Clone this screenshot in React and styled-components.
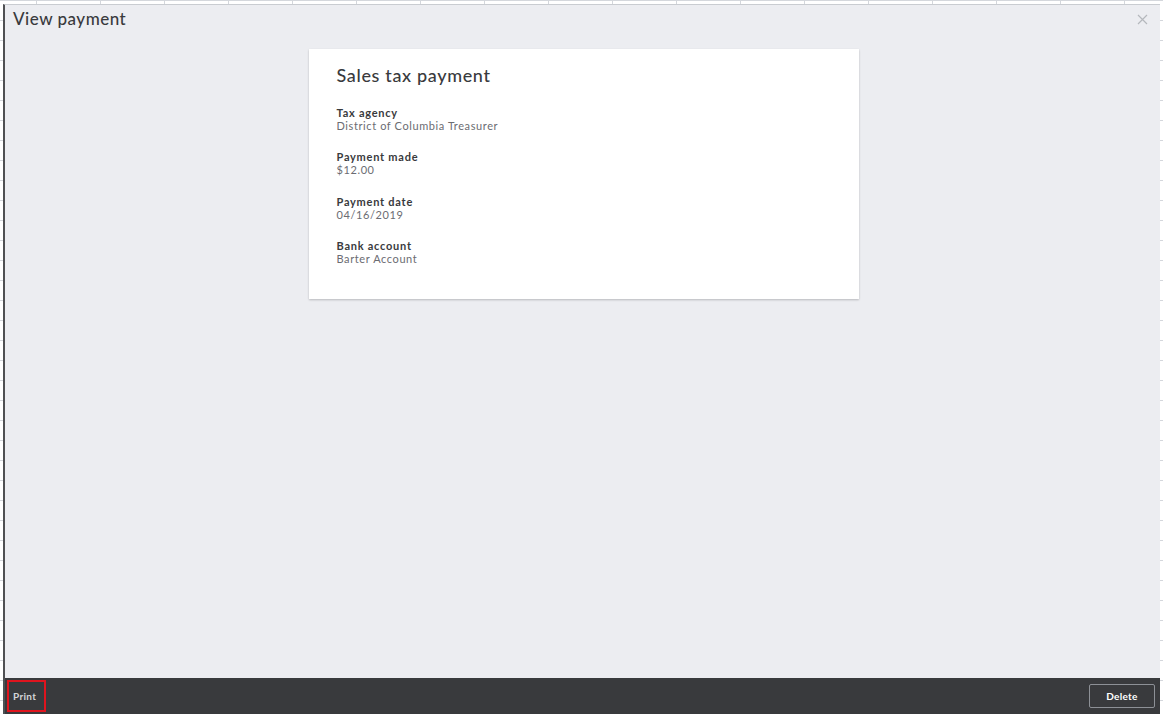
import React from "react";
import styled, { createGlobalStyle } from "styled-components";

const GlobalStyle = createGlobalStyle`
  html, body {
    margin: 0;
    padding: 0;
    height: 714px;
    overflow: hidden;
  }

  body {
    font-family: Lato, "Open Sans", sans-serif;
    background-color: #ffffff;
    background-image:
      linear-gradient(to right, #d4d7dc 1px, transparent 1px),
      linear-gradient(to bottom, #d4d7dc 1px, transparent 1px);
    background-size: 64px 20px, 64px 20px;
    background-position: 36px 0, 0 0;
  }
`;

const fields = [
  { label: "Tax agency", value: "District of Columbia Treasurer" },
  { label: "Payment made", value: "$12.00" },
  { label: "Payment date", value: "04/16/2019" },
  { label: "Bank account", value: "Barter Account" },
];

const CloseIcon = () => (
  <svg width="11" height="11" viewBox="0 0 11 11">
    <path d="M1 1L10 10M10 1L1 10" stroke="#b5b8bd" strokeWidth="1.2" fill="none" />
  </svg>
);

const App = () => {
  return (
    <>
      <GlobalStyle />
      <Panel>
        <Header>
          <h1>View payment</h1>
          <CloseButton aria-label='Close'>
            <CloseIcon />
          </CloseButton>
        </Header>
        <Body>
          <Card>
            <h2>Sales tax payment</h2>
            {fields.map((f) => (
              <Field key={f.label}>
                <dt>{f.label}</dt>
                <dd>{f.value}</dd>
              </Field>
            ))}
          </Card>
        </Body>
        <Footer>
          <FooterButton $focused>Print</FooterButton>
          <FooterButton $outlined>Delete</FooterButton>
        </Footer>
      </Panel>
    </>
  );
};

export default App;

const Panel = styled.div`
  display: flex;
  flex-direction: column;
  height: 709px;
  margin: 4px 3px 0 3px;
  border-top: 1px solid #c9ccd1;
  border-left: 2px solid #4f5053;
  background-color: #ecedf1;
`;

const Header = styled.header`
  display: flex;
  align-items: center;
  justify-content: space-between;
  height: 27px;
  padding: 0 12px 0 8px;

  h1 {
    margin: 0;
    font-size: 17px;
    font-weight: 500;
    letter-spacing: 0.5px;
    color: #393a3d;
  }
`;

const CloseButton = styled.button`
  display: flex;
  padding: 0;
  margin-top: 2px;
  border: none;
  background: none;
`;

const Body = styled.main`
  flex: 1;
  display: flex;
  justify-content: center;
  align-items: flex-start;
  padding-top: 17px;
  padding-left: 2px;
`;

const Card = styled.dl`
  width: 550px;
  margin: 0;
  padding: 14px 28px 34px;
  box-sizing: border-box;
  background-color: #ffffff;
  box-shadow: 0 1px 2px rgba(0, 0, 0, 0.22);

  h2 {
    margin: 0;
    font-size: 18px;
    line-height: 24px;
    font-weight: 500;
    letter-spacing: 0.65px;
    color: #393a3d;
  }
`;

const Field = styled.div`
  margin-top: 18.5px;

  dt {
    font-size: 11px;
    line-height: 13px;
    font-weight: 700;
    letter-spacing: 0.75px;
    color: #393a3d;
  }

  dd {
    margin: 0;
    font-size: 11px;
    line-height: 13px;
    letter-spacing: 0.6px;
    color: #6b6c72;
  }
`;

const Footer = styled.footer`
  display: flex;
  align-items: center;
  justify-content: space-between;
  height: 36px;
  padding: 0 5px 0 2px;
  background-color: #393a3d;
`;

const FooterButton = styled.button`
  height: ${({ $focused }) => ($focused ? "32px" : "24px")};
  padding: ${({ $focused }) => ($focused ? "0 8px 0 4px" : "0 15px")};
  font-family: Lato, "Open Sans", sans-serif;
  font-size: 10px;
  font-weight: 700;
  letter-spacing: 0.3px;
  text-align: ${({ $focused }) => ($focused ? "left" : "center")};
  color: ${({ $focused }) => ($focused ? "#d3d4d7" : "#ffffff")};
  background: transparent;
  border: ${({ $focused, $outlined }) =>
    $focused ? "2px solid #e0141e" : $outlined ? "1px solid #8d9096" : "none"};
  border-radius: ${({ $outlined }) => ($outlined ? "2px" : "0")};
  width: ${({ $focused }) => ($focused ? "39px" : "66px")};
`;
